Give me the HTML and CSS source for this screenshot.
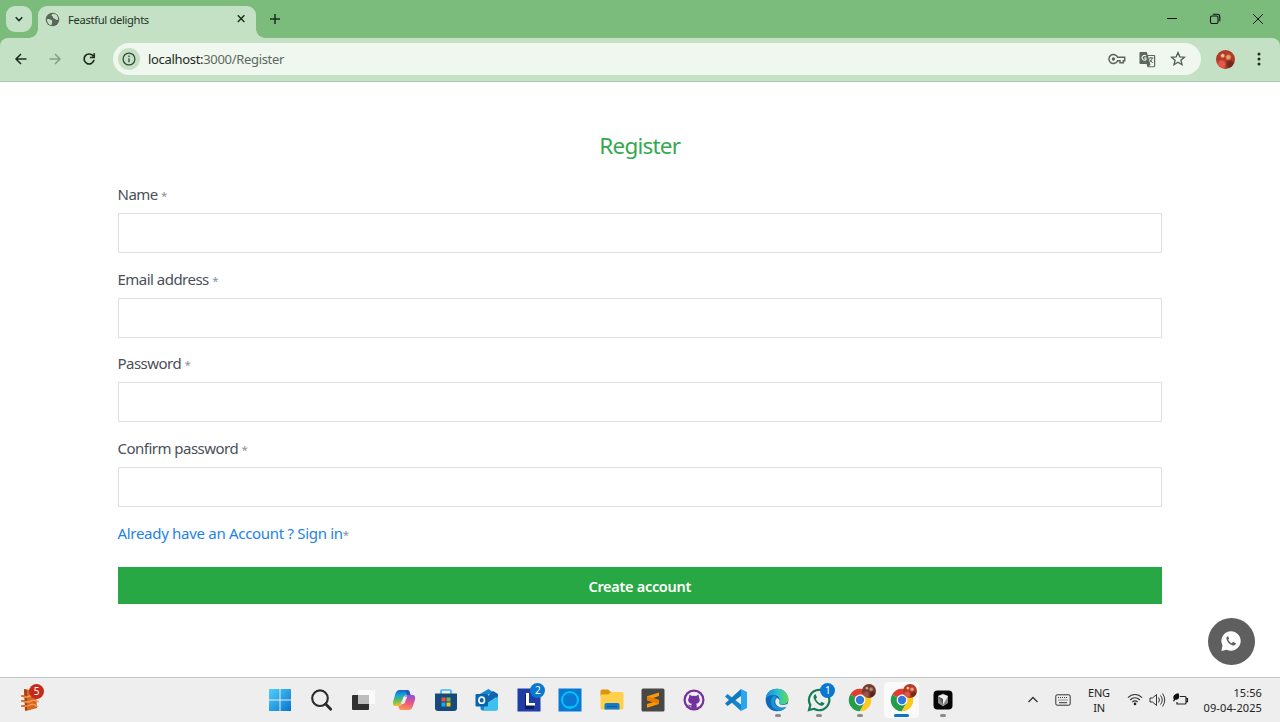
FILE: index.html
```html
<!DOCTYPE html>
<html lang="en">
<head>
<meta charset="utf-8">
<title>Feastful delights</title>
<link rel="stylesheet" href="styles.css">
</head>
<body>
<header class="titlebar">
  <button class="tab-search" aria-label="Search tabs"><svg width="12" height="12" viewBox="0 0 12 12" fill="none" stroke="#1c2b1c" stroke-width="1.500"><path d="M2.700 4.300 6 7.600l3.300-3.300"/></svg></button>
  <div class="tab">
    <svg class="favicon" width="15" height="15" viewBox="0 0 15 15"><circle cx="7.500" cy="7.500" r="6.800" fill="#5a665b"/><path d="M2 7.200c2-.6 4.200.2 5 1.500.5 1-.2 1.800-.1 3.300l-.7 1.300C3.500 12.500 1.700 10 2 7.200ZM8.300 1.800c-2 .5-2.300 1.700-1.200 2.400 1 .4 1.200.6.800 1.600.7 1.200 2 .5 2.600 1.500.9 1 2 .8 2.700.2C13.300 4.500 11.400 2 8.300 1.800Z" fill="#c5e1c5"/></svg>
    <span class="tab-title">Feastful delights</span>
    <svg width="10" height="10" viewBox="0 0 10 10" stroke="#1c2b1c" stroke-width="1.400"><path d="m1.800 1.300 6.600 6.600m0-6.600-6.600 6.600"/></svg>
  </div>
  <svg class="new-tab" width="12" height="12" viewBox="0 0 12 12" stroke="#1c2b1c" stroke-width="1.500"><path d="M6 1v10M1 6h10"/></svg>
  <div class="window-controls">
    <svg width="12" height="12" viewBox="0 0 12 12" stroke="#111"><path d="M1 5.500h10"/></svg>
    <svg width="12" height="12" viewBox="0 0 12 12" fill="none" stroke="#111" stroke-width="1.100"><rect x="1.500" y="3" width="7.500" height="7.500" rx="1.500"/><path d="M3.800 1.200h4.500a2.500 2.500 0 0 1 2.500 2.500v4.500"/></svg>
    <svg width="12" height="12" viewBox="0 0 12 12" stroke="#111"><path d="m1.200 1.200 9.600 9.600m0-9.600-9.600 9.600"/></svg>
  </div>
</header>
<div class="toolbar-wrap">
<nav class="toolbar">
  <div class="nav-buttons">
    <svg width="14" height="14" viewBox="0 0 14 14" fill="none" stroke="#1d2b1e" stroke-width="1.500"><path d="M12.500 7H2m5-5L2 7l5 5"/></svg>
    <svg width="14" height="14" viewBox="0 0 14 14" fill="none" stroke="#87a087" stroke-width="1.500"><path d="M1.500 7H12M7 2l5 5-5 5"/></svg>
    <svg width="14" height="14" viewBox="0 0 14 14" fill="none" stroke="#1d2b1e" stroke-width="1.700"><path d="M11.300 4.300A5 5 0 1 0 12 7.900M12.200 1.200v4.300H8"/></svg>
  </div>
  <div class="address">
    <span class="site-info"><svg width="14" height="14" viewBox="0 0 14 14" fill="none" stroke="#3a473b" stroke-width="1.300"><circle cx="7" cy="7" r="5.900"/><path d="M7 6.300v4M7 3.600v1.500"/></svg></span>
    <span class="url"><span class="host">localhost:</span>3000/Register</span>
    <svg class="key" width="18" height="14" viewBox="0 0 18 14" fill="none" stroke="#5b665c" stroke-width="1.500"><path d="M9.600 5.300A4.500 4.500 0 1 0 9.600 8.700H12v2h3.300v-2h1.400V5.300Z"/><circle cx="5.400" cy="7" r="1.700" fill="#5b665c" stroke="none"/></svg>
    <svg class="translate" width="17" height="17" viewBox="0 0 17 17"><path d="M1.500 1h6.200l1 3h6.300c.7 0 1.200.5 1.200 1.200V15c0 .7-.5 1.200-1.200 1.200H8.500L7.600 13H1.500C.9 13 .5 12.500.5 12V2c0-.6.500-1 1-1Z" fill="#5b665c"/><path d="m9 5 2.500 9-2 1.300H15V5Z" fill="#eff7ef"/><path d="M7 5.100A2.300 2.300 0 1 0 7 8.500V7H5" fill="none" stroke="#eff7ef" stroke-width="1.100"/><path d="M9.700 7h4.600M12 6v1m1.200 0c-.4 2-1.500 3.500-2.700 4.500M10.700 8.500l3 3.500" fill="none" stroke="#5b665c"/></svg>
    <svg class="star" width="16" height="16" viewBox="0 0 16 16" fill="none" stroke="#4f5b50" stroke-width="1.300"><path d="m8 1.600 1.800 4.200 4.600.4-3.500 3 1.100 4.500L8 11.300l-4 2.400 1.100-4.500-3.500-3 4.600-.4Z"/></svg>
  </div>
  <span class="avatar profile"></span>
  <svg class="menu-dots" width="4" height="16" viewBox="0 0 4 16" fill="#1d2b1e"><circle cx="2" cy="3" r="1.500"/><circle cx="2" cy="8" r="1.500"/><circle cx="2" cy="13" r="1.500"/></svg>
</nav>
</div>
<main class="page">
  <form class="register">
    <h1>Register</h1>
    <div class="field"><label for="name">Name <i>*</i></label><input id="name" type="text"></div>
    <div class="field"><label for="email">Email address <i>*</i></label><input id="email" type="email"></div>
    <div class="field"><label for="pw">Password <i>*</i></label><input id="pw" type="password"></div>
    <div class="field"><label for="pw2">Confirm password <i>*</i></label><input id="pw2" type="password"></div>
    <p class="signin"><a>Already have an Account ? Sign in</a><i>*</i></p>
    <button class="submit" type="button">Create account</button>
  </form>
  <div class="whatsapp"><svg width="20" height="20" viewBox="0 0 20 20"><path d="M10 .3a9.700 9.700 0 1 1-4.300 18.400L.4 19.900l1.100-5.300A9.700 9.700 0 0 1 10 .3Z" fill="#fff"/><path d="M6.800 5.200c-1.200.5-1.700 1.800-1.200 3.200 1 3 3.200 5.100 6.200 6 1.400.4 2.700-.3 3-1.600.1-.5 0-.7-.4-.9l-1.900-.9c-.4-.1-.6 0-.9.3l-.7.9c-1.800-.7-3-1.900-3.800-3.500l.8-1c.2-.3.100-.6 0-.8l-.7-1.500c-.1-.2-.2-.2-.4-.2Z" fill="#5f5f5f"/></svg></div>
</main>
<footer class="taskbar">
  <div class="widget"><svg width="20" height="24" viewBox="0 0 20 24"><path d="m3 1 12 2 1 17L5 23Z" fill="#d9641d"/><path d="m3 1 3 1v20l-2 1Z" fill="#a84312"/><path d="M1 8q4 2 8 0t9 1M1 13q5 2 9 0t8 1M1 18q5 1 8-1t8 2" fill="none" stroke="#f0a15c" stroke-width="1.500"/><path d="M0 8h4m-4 5h4m-4 5h4" stroke="#d65c18" stroke-width="1.500"/></svg><span class="badge red">5</span></div>
  <div class="apps">
    <div class="app"><svg width="24" height="24" viewBox="0 0 24 24"><defs><linearGradient id="win" x2="1" y2="1"><stop stop-color="#4fd0fa"/><stop offset="1" stop-color="#0873cf"/></linearGradient></defs><path d="M1 1h10.500v10.500H1Zm11.500 0H23v10.500H12.500ZM1 12.500h10.500V23H1Zm11.500 0H23V23H12.500Z" fill="url(#win)"/></svg></div>
    <div class="app"><svg width="24" height="24" viewBox="0 0 24 24" fill="none" stroke="#2b2b2b"><circle cx="11" cy="10.200" r="7.800" stroke-width="2.100"/><path d="m16.700 16 5 5.200" stroke-width="2.800" stroke-linecap="round"/></svg></div>
    <div class="app"><svg width="24" height="24" viewBox="0 0 24 24"><rect x="1" y="7" width="17" height="15" rx="1" fill="#303030"/><rect x="7" y="2" width="17" height="14" rx="1" fill="#fafafa"/><path d="M7 7h11v9H7Z" fill="#bdbdbd"/></svg></div>
    <div class="app"><svg width="24" height="24" viewBox="0 0 24 24"><defs><linearGradient id="cpa" y2="1" x2=".1"><stop stop-color="#1555c0"/><stop offset=".35" stop-color="#17a4d8"/><stop offset=".65" stop-color="#55bd63"/><stop offset="1" stop-color="#f4c21f"/></linearGradient><linearGradient id="cpb" x1=".6" y1="0" x2=".4" y2="1"><stop stop-color="#9150d8"/><stop offset=".5" stop-color="#ec5485"/><stop offset="1" stop-color="#fb9752"/></linearGradient></defs><path d="M8 2h7c2 0 2.300 1 3 3.200l.6 1.800H15c-2 0-2.800 1-3.300 2.700l-1.800 5.800C9.300 17.500 8.500 18 6.500 18H4c-3 0-3.500-2-2.700-5l2-7C4.100 3.200 5.500 2 8 2Z" fill="url(#cpa)"/><path d="M18 7h2c3 0 3.700 2 2.900 5l-2 6c-.9 3-2.300 4-4.900 4H9.500c-2 0-2.500-1-3-4 2.500 0 3.400-1 4-2.800l1.800-5.600C13 7.500 14.500 7 18 7Z" fill="url(#cpb)"/><path d="m11.600 8.700 3.700-.3-3 7.300-3.500.4Z" fill="#eee"/><path d="M15 2c2 0 2.300 1 3 3.200l.6 1.800H15l-2-5Z" fill="#2456bc"/></svg></div>
    <div class="app"><svg width="24" height="24" viewBox="0 0 24 24"><path d="M7 6V3q0-1 1-1h8q1 0 1 1v3" fill="none" stroke="#35bdf0" stroke-width="1.700"/><path d="M1 5.500h22V20q0 3-3 3H4q-3 0-3-3Z" fill="#174a7c"/><path d="M7.500 9.500h4v4h-4Z" fill="#ed5335"/><path d="M12.500 9.500h4v4h-4Z" fill="#7db73a"/><path d="M7.500 14.500h4v4h-4Z" fill="#20a4e8"/><path d="M12.500 14.500h4v4h-4Z" fill="#ffc21a"/></svg></div>
    <div class="app"><svg width="24" height="24" viewBox="0 0 24 24"><path d="M4 6.500 13.500 1 23 7.500V20q0 2.500-2.500 2.500H8Q5.500 22.500 5.500 20Z" fill="#1685d1"/><path d="M7 6h14v8l-7 3-7-3Z" fill="#70d4f8"/><path d="m23 9-14 8v5.500h11.500Q23 22.500 23 20Z" fill="#3cc0f0"/><path d="m23 8-10 6.500V8l5-5 5 3Z" fill="#1263ae"/><rect x=".5" y="6" width="12.500" height="12.500" rx="1" fill="#0864ac"/><ellipse cx="6.700" cy="12.200" rx="2.800" ry="3.100" fill="none" stroke="#fff" stroke-width="1.600"/></svg></div>
    <div class="app"><svg width="24" height="24" viewBox="0 0 24 24"><path d="M.5.5h23v23H.5Z" fill="#203ca6"/><path d="M11 6v11h6v4H8V7Z" fill="#0b1b5e"/><path d="M9 5h3v10h6v2.500H9Z" fill="#fff"/></svg><span class="badge blue">2</span></div>
    <div class="app"><svg width="24" height="24" viewBox="0 0 24 24"><path d="M.5.5h23v23H.5Z" fill="#0878d4"/><circle cx="12" cy="12" r="8" fill="none" stroke="#00c4f5" stroke-width="2"/><path d="M8 18q4 .3 8 0l-4 2.800Z" fill="#00c4f5"/></svg></div>
    <div class="app"><svg width="24" height="24" viewBox="0 0 24 24"><path d="M.5 3q0-1.500 1.500-1.500h6L11 4v4H.5Z" fill="#d9960a"/><path d="M.5 6.500H8L11 4h11q1.500 0 1.500 1.500V20q0 1.500-1.500 1.500H2Q.5 21.500.5 20Z" fill="#ffd04c"/><path d="M4.500 21.500V17q0-2 2-2h11q2 0 2 2v4.500Z" fill="#1479c9"/><path d="M7 18.500h10" stroke="#0b5b9c"/></svg></div>
    <div class="app"><svg width="24" height="24" viewBox="0 0 24 24"><rect x=".5" y=".5" width="23" height="23" rx="1.500" fill="#474747"/><path d="M18 4.500 6 8.200v4l6 2-6 1.900v3.600l12-3.800v-4l-6-1.900 6-2Z" fill="#ff9800"/><path d="m6 8.200 12 3.700v4L6 12.200Z" fill="#e77d00"/></svg></div>
    <div class="app"><svg width="24" height="24" viewBox="0 0 24 24"><circle cx="12" cy="12" r="10.500" fill="#74309b"/><circle cx="12" cy="12" r="8.300" fill="#eee"/><path d="M7.500 6.500 10 8q2-.4 4 0l2.500-1.500.5 3q1 1.400.7 3c-.3 2-1.700 3-3.700 3.300q.7.700.7 2v2.400q-2.700.7-5.400 0v-1.700c-2 .4-2.700-.5-3.500-2 1.300 0 1.500 1 3.500.9l.5-1.600c-2-.3-3.300-1.300-3.600-3.300q-.3-1.600.8-3Z" fill="#74309b"/></svg></div>
    <div class="app"><svg width="24" height="24" viewBox="0 0 24 24"><path d="M3.500 6 17 16.500V23L1 8.500Z" fill="#1683cf"/><path d="M17 1v7L3.500 18 1 15.500Z" fill="#1278c2"/><path d="m17 1 6 3v16l-6 3Z" fill="#2aa6ee"/></svg></div>
    <div class="app running"><svg width="24" height="24" viewBox="0 0 24 24"><defs><linearGradient id="edg" x2="1"><stop stop-color="#1689d8"/><stop offset=".5" stop-color="#26bdd5"/><stop offset="1" stop-color="#61dc55"/></linearGradient></defs><circle cx="12" cy="12" r="11.300" fill="#1068b6"/><path d="M.8 11C1 4 6 .7 12 .7c7 0 11.300 5 11.300 10.300 0 4-3 5.500-6 5.500-2.500 0-4-.8-4-2 0-.8 1.200-1.300 1.200-3 0-2.500-2.500-4.500-6-4.500C5 7 2 8.500.8 11Z" fill="url(#edg)"/><path d="M9.500 7.200C6 9 5 13 6.500 17c1.300 3.500 5 6 9 5.700 2.500-.5 5-2 6-3.700-7 2.500-12-1-12-5 0-2 1-3.500 2.500-4.500Z" fill="#1594d8"/><path d="M12 10c2.300.7 2.900 2.400 2 4-.8 3.200 4.500 4.200 9 1.600l-1.300 3.200C16 21 10.300 18 10.300 13.700c0-1.500.6-2.800 1.700-3.700Z" fill="#eee"/></svg></div>
    <div class="app running"><svg width="24" height="24" viewBox="0 0 24 24"><path d="M12 1.800a10.200 10.200 0 1 1-5 19L2 22l1.300-5A10.200 10.200 0 0 1 12 1.800Z" fill="#eee" stroke="#147d56" stroke-width="2.200"/><path d="M8.500 6c-2 1-2.500 3-1.500 5 1.500 3.300 3.500 5.400 6.500 6.500 2 .7 3.700-.5 4-2.300l-3-1.500-1.400 1.700c-2.100-1-3.500-2.500-4.300-4.400L10 9.500Z" fill="#147d56"/></svg><span class="badge blue">1</span></div>
    <div class="app running"><svg width="24" height="24" viewBox="0 0 24 24"><path d="M12 12 2.200 6.400A11.300 11.300 0 0 1 22 6.700H12Z" fill="#df3e31"/><path d="M12 12H12l4.600 2.700-4.800 8.600A11.300 11.300 0 0 1 2.200 6.400Z" fill="#249e4a"/><path d="M12 6.700h10a11.300 11.300 0 0 1-10.200 16.600l4.800-8.600Z" fill="#fcc91d"/><circle cx="12" cy="12" r="5.400" fill="#fff"/><circle cx="12" cy="12" r="4.200" fill="#3478df"/></svg><span class="avatar overlay dim"></span></div>
    <div class="app running active"><svg width="24" height="24" viewBox="0 0 24 24"><path d="M12 12 2.200 6.400A11.300 11.300 0 0 1 22 6.700H12Z" fill="#df3e31"/><path d="M12 12H12l4.600 2.700-4.800 8.600A11.300 11.300 0 0 1 2.200 6.400Z" fill="#249e4a"/><path d="M12 6.700h10a11.300 11.300 0 0 1-10.200 16.600l4.800-8.600Z" fill="#fcc91d"/><circle cx="12" cy="12" r="5.400" fill="#fff"/><circle cx="12" cy="12" r="4.200" fill="#3478df"/></svg><span class="avatar overlay"></span></div>
    <div class="app running"><svg width="24" height="24" viewBox="0 0 24 24"><rect x="2.500" y="2.500" width="19" height="19" rx="4" fill="#050505"/><path d="m7 8 5-2.500L17 8v7l-5 3.500L7 15Z" fill="#888"/><path d="m7 8 5-1.500L17 8l-5 9v-6Z" fill="#eee"/><path d="m7.500 9 4.500 2v5Z" fill="#555"/></svg></div>
  </div>
  <div class="tray">
    <svg width="12" height="12" viewBox="0 0 12 12" fill="none" stroke="#333" stroke-width="1.300"><path d="m1.500 8 4.500-4.500 4.500 4.500"/></svg>
    <svg width="16" height="12" viewBox="0 0 16 12" fill="none" stroke="#333"><rect x=".8" y=".8" width="14.400" height="10.400" rx="1.300"/><path d="M3 3.500h10M3.500 6h9" stroke-dasharray="1 1"/><path d="M4 8.700h8"/></svg>
    <div class="lang">ENG<br>IN</div>
    <div class="status">
      <svg width="16" height="14" viewBox="0 0 16 14" fill="none" stroke="#333" stroke-width="1.200"><path d="M1 4.700c4-4.300 10-4.300 14 0M3.200 7c2.800-3 6.800-3 9.600 0M5.300 9.100c1.600-1.700 3.800-1.700 5.400 0"/><circle cx="8" cy="10.900" r="1.300" fill="#222" stroke="none"/></svg>
      <svg width="17" height="14" viewBox="0 0 17 14" fill="none" stroke="#333"><path d="M1 5h2.500L7.500 1.500v11L3.500 9H1Zm8.500-.5q2 2.500 0 5m2-7q3.500 4.500 0 9m2-11q4.500 6.500 0 13"/></svg>
      <svg width="17" height="14" viewBox="0 0 17 14"><path d="M8 3.500h5q1 0 1 1V10q0 1-1 1H5V9M14.500 5.700h1v3h-1" fill="none" stroke="#222" stroke-width="1.200"/><path d="M6.500.3C2 .8.500 3.500 1.800 6.500L1 8.300h1.400l.7-1.500C7 7 8.200 4.500 6.500.3Z" fill="#111"/></svg>
    </div>
    <div class="clock">15:56<br>09-04-2025</div>
  </div>
</footer>
</body>
</html>
```
FILE: styles.css
```css
* { box-sizing: border-box; }
body {
  margin: 0;
  width: 1280px;
  height: 722px;
  overflow: hidden;
  display: grid;
  grid-template-rows: 38px 44px 595px 45px;
  background: #fff;
  font-family: "Noto Sans", "Open Sans", sans-serif;
}
svg { display: block; flex: none; }
button { border: 0; padding: 0; font-family: inherit; }

.titlebar { display: flex; background: #7bbb7c; padding-left: 6px; }
.tab-search {
  width: 26px; height: 26px; margin-top: 6px;
  border-radius: 9px; background: #c5e1c5;
  display: grid; place-items: center;
}
.tab {
  position: relative;
  width: 218px; height: 32px; margin: 6px 0 0 6px; padding: 0 10px 6px 7px;
  display: flex; align-items: center; gap: 8px;
  border-radius: 9px 9px 0 0; background: #c5e1c5;
}
.tab::before, .tab::after {
  content: ""; position: absolute; bottom: 0; width: 9px; height: 9px;
}
.tab::before { left: -9px; background: radial-gradient(circle at 0 0, transparent 8.5px, #c5e1c5 9px); }
.tab::after { right: -9px; background: radial-gradient(circle at 100% 0, transparent 8.5px, #c5e1c5 9px); }
.tab-title { flex: 1; font-size: 11.2px; letter-spacing: -.33px; color: #243225; white-space: nowrap; }
.new-tab { margin: 13px 0 0 13px; }
.window-controls { margin: 13px 16px 0 auto; display: flex; gap: 31px; }

.toolbar-wrap { background: #7bbb7c; }
.toolbar {
  height: 44px; display: flex; align-items: center;
  background: #c5e1c5; border-bottom: 1px solid #afc6af;
  border-radius: 8px 8px 0 0; padding: 0 19px 1px 14px;
}
.nav-buttons { display: flex; gap: 20px; margin-right: 17px; }
.address {
  width: 1088px; height: 32px; border-radius: 16px; background: #eff7ef;
  display: flex; align-items: center; padding: 0 15px 0 5px;
}
.site-info { width: 22px; height: 22px; border-radius: 50%; background: #c5e1c5; display: grid; place-items: center; margin-right: 8px; }
.url { flex: 1; font-size: 13px; letter-spacing: -.32px; color: #5d695e; }
.host { color: #1d291e; }
.translate { margin: 0 14px 0 13px; }
.avatar {
  border-radius: 50%;
  background:
    radial-gradient(circle at 35% 30%, #f0c39b 0 6%, transparent 14%),
    radial-gradient(circle at 65% 38%, #e8a06c 0 8%, transparent 20%),
    radial-gradient(circle at 30% 75%, #e5574a 0 14%, transparent 26%),
    radial-gradient(circle at 75% 75%, #74291c 0 12%, transparent 26%),
    #b23a26;
}
.profile { width: 19px; height: 19px; margin-left: 15px; }
.menu-dots { margin-left: auto; }

.page { position: relative; }
.register { width: 1044.5px; margin-left: 117.5px; padding-top: 46px; display: flex; flex-direction: column; }
.register h1 { margin: 0; height: 40px; line-height: 36px; text-align: center; font-size: 22.5px; font-weight: 400; letter-spacing: -.8px; color: #35a94f; }
.field { height: 84.7px; }
.field label { display: block; height: 45px; line-height: 53px; font-size: 15px; letter-spacing: -.52px; color: #495057; }
.field input { display: block; width: 100%; height: 40px; border: 1px solid #dee0e2; background: #fff; padding: 0 12px; }
.register i { font-style: normal; font-size: 11.5px; letter-spacing: 0; color: #8a9199; }
.signin { margin: 0; height: 60px; line-height: 53px; font-size: 15px; letter-spacing: -.3px; color: #2382e8; }
.submit { height: 37.5px; background: #28a745; color: #fff; font-size: 14.5px; font-weight: 600; letter-spacing: -.3px; }
.whatsapp {
  position: absolute; right: 25.5px; bottom: 12.5px; width: 47px; height: 47px;
  border-radius: 50%; background: #5f5f5f; display: grid; place-items: center;
}

.taskbar { background: #eee; border-top: 1px solid #c3c5c5; display: flex; align-items: center; }
.widget { position: relative; width: 24px; margin-left: 21px; }
.apps { display: grid; grid-template-columns: repeat(17, 41.45px); margin-left: 214.3px; height: 44px; }
.app { position: relative; display: grid; place-items: center; }
.app > svg { position: relative; }
.badge {
  position: absolute; top: 5px; right: 4px; width: 15px; height: 15px; border-radius: 50%;
  color: #fff; font-size: 10px; line-height: 15px; text-align: center;
}
.widget .badge { top: -4px; right: 1px; }
.red { background: #c42b1c; }
.blue { background: #0b78d0; }
.overlay { position: absolute; top: 6px; right: 5px; width: 14px; height: 14px; }
.dim { filter: saturate(.6) brightness(.85); }
.running::after {
  content: ""; position: absolute; bottom: 5px; left: 18px; width: 6px; height: 3px;
  border-radius: 2px; background: #8b8b8b;
}
.active::before { content: ""; position: absolute; top: 4px; left: 3px; width: 35px; height: 36px; border-radius: 4px; background: #fafafa; }
.active::after { left: 13px; width: 15px; background: #0b73c8; }
.tray { margin-left: auto; padding-right: 18px; display: flex; align-items: center; font-size: 11px; line-height: 15px; color: #222; }
.tray > svg:nth-child(2) { margin-left: 16px; }
.lang { margin-left: 16px; width: 24px; text-align: center; letter-spacing: -.2px; }
.status { margin-left: 16px; display: flex; gap: 6px; }
.clock { margin-left: 13px; width: 60px; text-align: right; letter-spacing: .1px; white-space: nowrap; }
```
